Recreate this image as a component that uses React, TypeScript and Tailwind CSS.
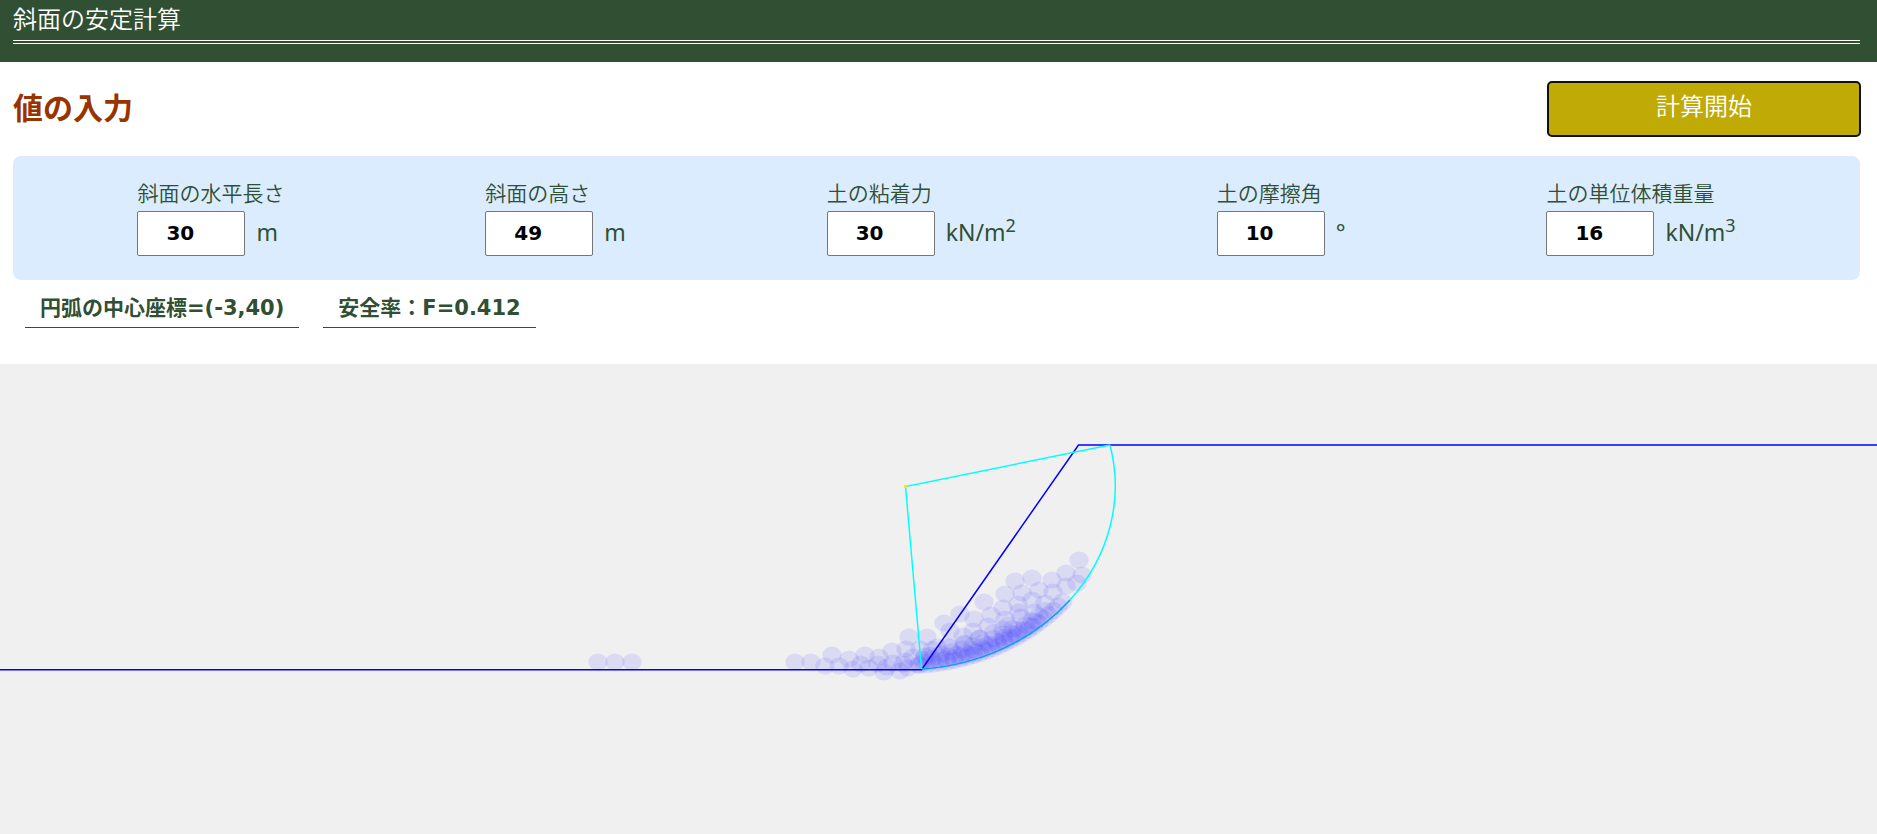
import { useState } from "react";

type Field = { id: string; label: string; value: string; unit: string; sup?: string };

const FIELDS: Field[] = [
  { id: "length", label: "斜面の水平長さ", value: "30", unit: "m" },
  { id: "height", label: "斜面の高さ", value: "49", unit: "m" },
  { id: "cohesion", label: "土の粘着力", value: "30", unit: "kN/m", sup: "2" },
  { id: "friction", label: "土の摩擦角", value: "10", unit: "°" },
  { id: "weight", label: "土の単位体積重量", value: "16", unit: "kN/m", sup: "3" },
];

// Soil grains that lie loose on the ground and on the upper face of the slide
const LOOSE_GRAINS: [number, number][] = [
  [598, 662], [615, 662], [632, 662], [795, 662], [811, 662], [825, 666], [832, 655],
  [839, 666], [849, 659], [853, 669], [861, 664], [865, 655], [869, 668], [878, 664],
  [879, 657], [884, 672], [887, 667], [892, 651], [893, 663], [900, 671], [903, 664],
  [906, 649], [905, 661], [908, 668], [909, 637], [913, 657],
  [920, 649], [918, 665], [927, 637], [925, 656], [937, 647], [944, 623], [950, 631],
  [960, 614], [963, 636], [974, 619], [973, 631], [984, 602], [988, 626], [991, 615],
  [1003, 608], [1005, 619], [1005, 594], [1015, 581], [1022, 593], [1018, 604],
  [1019, 612], [1032, 578], [1039, 590], [1032, 600], [1034, 612],
  [1045, 603], [1052, 580], [1053, 592], [1066, 573],
  [1066, 586], [1077, 583], [1079, 560], [1082, 575], [950, 647],
  [965, 644], [980, 638], [1003, 629],
];

// Packed grains: distance from the slip surface, spacing, first and last angle
const PACKED_ROWS: [number, number, number, number][] = [
  [5, 7, 4, 51],
  [8, 8, 5, 42],
  [11, 9, 5, 45],
  [15, 12, 7, 36],
  [21, 18, 8, 42],
];

const CX = 906;
const CY = 486;
const RX = 210;
const RY = 184;

const packed: [number, number][] = PACKED_ROWS.flatMap(([inset, step, from, to]) => {
  const row: [number, number][] = [];
  const delta = (step / RX) * (180 / Math.PI);
  for (let a = from; a <= to; a += delta) {
    const t = (a * Math.PI) / 180;
    row.push([CX + (RX - inset) * Math.sin(t), CY + (RY - inset * 0.9) * Math.cos(t)]);
  }
  return row;
});

function Slope() {
  return (
    <svg viewBox="0 364 1877 470" className="block h-auto w-full" role="img" aria-label="斜面">
      <g fill="#5050ff" fillOpacity="0.138">
        {[...LOOSE_GRAINS, ...packed].map(([x, y], i) => (
          <ellipse key={i} cx={x} cy={y} rx="9.7" ry="8.6" />
        ))}
      </g>
      <path d="M0 669.7H921.5L1078.5 445H1877" fill="none" stroke="#0000ff" strokeWidth="1.5" />
      <path d="M1110 445A210 184 0 0 1 1070 600" fill="none" stroke="#00ffff" strokeWidth="1.5" />
      <path d="M1070 600A210 184 0 0 1 921.5 669" fill="none" stroke="#00a0ff" strokeWidth="1.5" />
      <path d="M921.5 669L905.5 486.5L1110 445" fill="none" stroke="#00ffff" strokeWidth="1.5" />
      <rect x="904" y="485" width="3" height="3" fill="#f0f000" />
    </svg>
  );
}

export default function App() {
  const [values, setValues] = useState<Record<string, string>>(
    Object.fromEntries(FIELDS.map((f) => [f.id, f.value])),
  );
  return (
    <div className="min-h-screen bg-[#f0f0f0] font-['DejaVu_Sans','Noto_Sans_CJK_JP',sans-serif] text-[#304f33]">
      <header className="bg-[#304f33] pr-[17px] pb-[18px] pl-[13px]">
        <h1 className="border-b-4 border-double border-white text-2xl leading-10 font-[350] text-white">
          斜面の安定計算
        </h1>
      </header>
      <main>
        <section className="bg-white pt-5 pr-[17px] pb-9 pl-[13px]">
          <div className="mb-5 flex items-center justify-between">
            <h2 className="text-[30px] leading-[48px] font-bold text-[#993300]">値の入力</h2>
            <button
              type="button"
              className="h-[54px] w-78 rounded-sm bg-[#c0aa05] pb-1 text-2xl font-[350] text-white outline-2 -outline-offset-1 outline-[#101010]"
            >
              計算開始
            </button>
          </div>
          <form className="flex justify-around rounded-lg bg-[#dbecff] p-6 text-[21px]">
            {FIELDS.map((f) => (
              <div key={f.id}>
                <label htmlFor={f.id} className="block leading-7 font-[350]">
                  {f.label}
                </label>
                <div className="mt-[3px] flex h-[45px] items-center gap-[11px]">
                  <input
                    id={f.id}
                    type="text"
                    inputMode="numeric"
                    value={values[f.id]}
                    onChange={(e) => setValues({ ...values, [f.id]: e.target.value })}
                    className="h-[45px] w-[108px] rounded-xs border border-[#767676] bg-white pb-[2px] pl-7 text-xl font-bold text-black"
                  />
                  <span className="pb-[3px] font-['Noto_Sans',sans-serif] text-[23px] leading-8 font-normal">
                    {f.unit}
                    {f.sup && <sup className="text-lg">{f.sup}</sup>}
                  </span>
                </div>
              </div>
            ))}
          </form>
          <div className="ml-3 flex gap-6 pt-[10px] text-[21px] leading-[37px] font-bold">
            <p className="border-b border-[#304f33] px-[15px]">円弧の中心座標=(-3,40)</p>
            <p className="border-b border-[#304f33] px-[15px]">安全率：F=0.412</p>
          </div>
        </section>
        <Slope />
      </main>
    </div>
  );
}
